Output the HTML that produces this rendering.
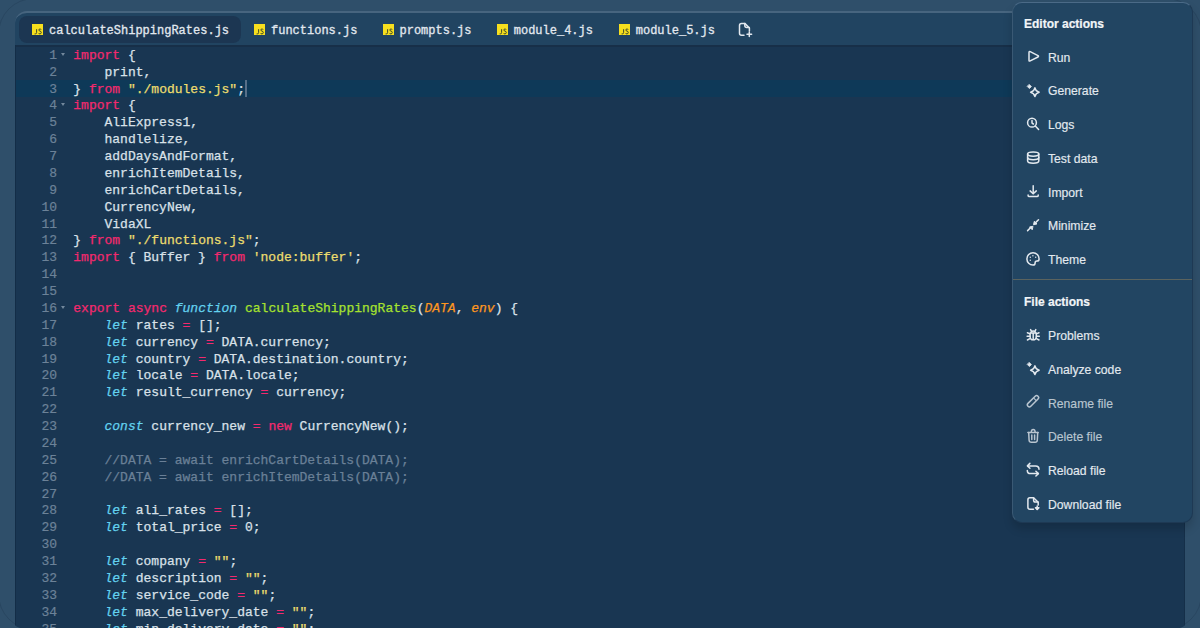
<!DOCTYPE html>
<html><head><meta charset="utf-8">
<style>
*{margin:0;padding:0;box-sizing:border-box}
html,body{width:1200px;height:628px;overflow:hidden}
body{background:#2f4f6a;position:relative;font-family:"Liberation Sans",sans-serif}
#panel{position:absolute;left:15px;top:11px;width:1170px;height:617.5px;border-radius:12px 12px 14px 14px / 12px 12px 5px 5px;background:#214461;border-top:2px solid #47657f;overflow:hidden}
#tabs{position:absolute;left:0;top:-1px;width:100%;height:34px;font-family:"Liberation Mono",monospace;font-size:12px;color:#e2e8ef}
.tab{position:absolute;top:4px;height:26.5px;line-height:26px;white-space:nowrap}
.tab.active{background:#1c3652;border-radius:8px}
.js{position:absolute}
.tt{position:absolute;top:1.6px;line-height:26px;-webkit-text-stroke:0.3px currentColor}
#code{position:absolute;left:0;top:32px;width:100%;height:620px;background:#193652;border-top:2px solid #172f48}
#hl{position:absolute;left:0;top:33px;width:100%;height:16.9px;background:#0e3958}
.ln{position:absolute;left:0;width:42px;text-align:right;font-family:"Liberation Mono",monospace;font-size:13px;color:#7b90a5}
#gut,#src{position:absolute;top:0.8px;font-family:"Liberation Mono",monospace;font-size:13px;line-height:16.88px;white-space:pre}
#gut{left:0;width:42px;text-align:right;color:#6c8298;-webkit-text-stroke:0.2px currentColor}
#src{left:58.3px;color:#d9e1e9;-webkit-text-stroke:0.25px currentColor}
.k{color:#f4296e}.s{color:#ecdd6e}.i{color:#63d2ef;font-style:italic}.f{color:#a6e22e}.p{color:#fd971f;font-style:italic}.c{color:#6a8097}
.fold{position:absolute;left:45.5px;width:0;height:0;border-left:2.7px solid transparent;border-right:2.7px solid transparent;border-top:3px solid #73889c}
#cursor{position:absolute;left:230px;top:33px;width:1.6px;height:16.5px;background:#566f88}
#menu{position:absolute;left:1012px;top:1.5px;width:181px;height:521px;border-radius:10px;background:#224562;border:1px solid;border-color:#4b6a87 #1e3954 #1e3954 #3a5974;box-shadow:0 6px 10px rgba(0,0,0,0.16)}
.mh{position:absolute;left:11px;font-weight:bold;font-size:12px;line-height:16px;-webkit-text-stroke:0.2px currentColor;color:#f2f5f8}
.mi{position:absolute;left:35px;font-size:12.2px;line-height:16px;-webkit-text-stroke:0.15px currentColor;color:#e3e9ef;white-space:nowrap}
.mi.dim{color:#b9c5d0}
.ic{position:absolute;left:14px;width:14px;height:14px;overflow:visible}
#sep{position:absolute;left:0px;top:276.5px;width:179px;height:1px;background:#5b635e}
</style></head><body>
<div style="position:absolute;left:-2px;top:-2px;width:1204px;height:632px;border-radius:36px;border:1px solid rgba(22,44,66,0.25)"></div>
<div id="panel">
 <div id="tabs">
  <div class="tab active" style="left:4px;width:222px"><svg class="js" style="left:13px;top:7.5px" width="11" height="11.5" viewBox="0 0 11 11.5"><rect width="11" height="11.5" fill="#f7df1e"/><path d="M4.6 5.2V8.6Q4.6 9.9 3.3 9.9H2.6M9.2 5.6Q8.9 5 8 5Q6.8 5 6.8 6Q6.8 6.8 8 7.1Q9.3 7.4 9.3 8.4Q9.3 9.9 7.9 9.9Q6.8 9.9 6.5 9.1" fill="none" stroke="#3d4a2a" stroke-width="1"/></svg><span class="tt" style="left:30px">calculateShippingRates.js</span></div>
  <div class="tab" style="left:226px;width:128px"><svg class="js" style="left:13px;top:7.5px" width="11" height="11.5" viewBox="0 0 11 11.5"><rect width="11" height="11.5" fill="#f7df1e"/><path d="M4.6 5.2V8.6Q4.6 9.9 3.3 9.9H2.6M9.2 5.6Q8.9 5 8 5Q6.8 5 6.8 6Q6.8 6.8 8 7.1Q9.3 7.4 9.3 8.4Q9.3 9.9 7.9 9.9Q6.8 9.9 6.5 9.1" fill="none" stroke="#3d4a2a" stroke-width="1"/></svg><span class="tt" style="left:30px">functions.js</span></div>
  <div class="tab" style="left:354.5px;width:114px"><svg class="js" style="left:13px;top:7.5px" width="11" height="11.5" viewBox="0 0 11 11.5"><rect width="11" height="11.5" fill="#f7df1e"/><path d="M4.6 5.2V8.6Q4.6 9.9 3.3 9.9H2.6M9.2 5.6Q8.9 5 8 5Q6.8 5 6.8 6Q6.8 6.8 8 7.1Q9.3 7.4 9.3 8.4Q9.3 9.9 7.9 9.9Q6.8 9.9 6.5 9.1" fill="none" stroke="#3d4a2a" stroke-width="1"/></svg><span class="tt" style="left:30px">prompts.js</span></div>
  <div class="tab" style="left:468.75px;width:122px"><svg class="js" style="left:13px;top:7.5px" width="11" height="11.5" viewBox="0 0 11 11.5"><rect width="11" height="11.5" fill="#f7df1e"/><path d="M4.6 5.2V8.6Q4.6 9.9 3.3 9.9H2.6M9.2 5.6Q8.9 5 8 5Q6.8 5 6.8 6Q6.8 6.8 8 7.1Q9.3 7.4 9.3 8.4Q9.3 9.9 7.9 9.9Q6.8 9.9 6.5 9.1" fill="none" stroke="#3d4a2a" stroke-width="1"/></svg><span class="tt" style="left:30px">module_4.js</span></div>
  <div class="tab" style="left:590.75px;width:122px"><svg class="js" style="left:13px;top:7.5px" width="11" height="11.5" viewBox="0 0 11 11.5"><rect width="11" height="11.5" fill="#f7df1e"/><path d="M4.6 5.2V8.6Q4.6 9.9 3.3 9.9H2.6M9.2 5.6Q8.9 5 8 5Q6.8 5 6.8 6Q6.8 6.8 8 7.1Q9.3 7.4 9.3 8.4Q9.3 9.9 7.9 9.9Q6.8 9.9 6.5 9.1" fill="none" stroke="#3d4a2a" stroke-width="1"/></svg><span class="tt" style="left:30px">module_5.js</span></div>
 </div>
 <div id="code">
  <div id="hl"></div><div style="position:absolute;left:0;top:-2px;width:1px;height:640px;background:#132d47"></div><div style="position:absolute;right:0;top:-2px;width:1px;height:640px;background:#152f49"></div><div class="fold" style="top:5.5px"></div><div class="fold" style="top:56.2px"></div><div class="fold" style="top:259px"></div><div id="cursor"></div>
  <div id="gut">1
2
3
4
5
6
7
8
9
10
11
12
13
14
15
16
17
18
19
20
21
22
23
24
25
26
27
28
29
30
31
32
33
34
35</div>
<div id="src"><span class="k">import</span> {
    print,
} <span class="k">from</span> <span class="s">"./modules.js"</span>;
<span class="k">import</span> {
    AliExpress1,
    handlelize,
    addDaysAndFormat,
    enrichItemDetails,
    enrichCartDetails,
    CurrencyNew,
    VidaXL
} <span class="k">from</span> <span class="s">"./functions.js"</span>;
<span class="k">import</span> { Buffer } <span class="k">from</span> <span class="s">'node:buffer'</span>;


<span class="k">export</span> <span class="k">async</span> <span class="i">function</span> <span class="f">calculateShippingRates</span>(<span class="p">DATA</span>, <span class="p">env</span>) {
    <span class="i">let</span> rates <span class="k">=</span> [];
    <span class="i">let</span> currency <span class="k">=</span> DATA.currency;
    <span class="i">let</span> country <span class="k">=</span> DATA.destination.country;
    <span class="i">let</span> locale <span class="k">=</span> DATA.locale;
    <span class="i">let</span> result_currency <span class="k">=</span> currency;

    <span class="i">const</span> currency_new <span class="k">=</span> <span class="k">new</span> CurrencyNew();

    <span class="c">//DATA = await enrichCartDetails(DATA);</span>
    <span class="c">//DATA = await enrichItemDetails(DATA);</span>

    <span class="i">let</span> ali_rates <span class="k">=</span> [];
    <span class="i">let</span> total_price <span class="k">=</span> 0;

    <span class="i">let</span> company <span class="k">=</span> <span class="s">""</span>;
    <span class="i">let</span> description <span class="k">=</span> <span class="s">""</span>;
    <span class="i">let</span> service_code <span class="k">=</span> <span class="s">""</span>;
    <span class="i">let</span> max_delivery_date <span class="k">=</span> <span class="s">""</span>;
    <span class="i">let</span> min_delivery_date <span class="k">=</span> <span class="s">""</span>;</div>
 </div>
</div>
<div id="menu"><div class="mh" style="top:13.3px">Editor actions</div><div class="mh" style="top:291.6px">File actions</div><div id="sep"></div><div class="mi" style="top:47.1px">Run</div><div class="mi" style="top:80.7px">Generate</div><div class="mi" style="top:114.6px">Logs</div><div class="mi" style="top:148.4px">Test data</div><div class="mi" style="top:182.1px">Import</div><div class="mi" style="top:215.9px">Minimize</div><div class="mi" style="top:249.8px">Theme</div><div class="mi" style="top:325.4px">Problems</div><div class="mi" style="top:359.2px">Analyze code</div><div class="mi dim" style="top:393.0px">Rename file</div><div class="mi dim" style="top:426.8px">Delete file</div><div class="mi" style="top:460.6px">Reload file</div><div class="mi" style="top:494.4px">Download file</div></div>
<svg style="position:absolute;left:1024px;top:48px" width="20" height="18" viewBox="0 0 20 18" fill="none" stroke="#e3e9ef" stroke-width="1.5" stroke-linecap="round" stroke-linejoin="round"><path d="M5 4.4Q5 3.1 6.2 3.7L14 7.6Q15 8.3 14 9L6.2 12.9Q5 13.5 5 12.2Z"/></svg><svg style="position:absolute;left:1024px;top:82px" width="20" height="18" viewBox="0 0 20 18" fill="none" stroke="#e3e9ef" stroke-width="1.5" stroke-linecap="round" stroke-linejoin="round"><path d="M5.4 2.6L7.4 4.6L5.4 6.6L3.4 4.6Z" fill="#e3e9ef" stroke-width="0.8"/><path d="M10.9 5.8Q11.7 9.4 15.2 10.2Q11.7 11 10.9 14.5Q10.1 11 6.6 10.2Q10.1 9.4 10.9 5.8Z"/></svg><svg style="position:absolute;left:1024px;top:116px" width="20" height="18" viewBox="0 0 20 18" fill="none" stroke="#e3e9ef" stroke-width="1.5" stroke-linecap="round" stroke-linejoin="round"><circle cx="8" cy="6.7" r="4.4"/><path d="M11.3 10L14.6 13.4"/><path d="M8 4.6V7.1L9.4 8"/></svg><svg style="position:absolute;left:1024px;top:148px" width="20" height="18" viewBox="0 0 20 18" fill="none" stroke="#e3e9ef" stroke-width="1.5" stroke-linecap="round" stroke-linejoin="round"><ellipse cx="9.2" cy="6.1" rx="5.6" ry="2.1"/><path d="M3.6 6.1V9.6A5.6 2.1 0 0 0 14.8 9.6V6.1"/><path d="M3.6 9.6V13.1A5.6 2.1 0 0 0 14.8 13.1V9.6"/></svg><svg style="position:absolute;left:1024px;top:182px" width="20" height="18" viewBox="0 0 20 18" fill="none" stroke="#e3e9ef" stroke-width="1.5" stroke-linecap="round" stroke-linejoin="round"><path d="M9.2 3.8V11.4"/><path d="M6.1 8.9L9.2 11.8L12.3 8.9"/><path d="M4.1 12.9V13.4Q4.1 14.5 5.3 14.5H13Q14.2 14.5 14.2 13.4V12.9"/></svg><svg style="position:absolute;left:1024px;top:216px" width="20" height="18" viewBox="0 0 20 18" fill="none" stroke="#e3e9ef" stroke-width="1.5" stroke-linecap="round" stroke-linejoin="round"><path d="M3.6 14.6L7 11.2"/><path d="M8.6 10.4L5.5 11L8 13.5Z" fill="#e3e9ef" stroke-width="1"/><path d="M14.5 3.7L11.3 6.9"/><path d="M9.6 8.4L10.3 5.3L12.7 7.7Z" fill="#e3e9ef" stroke-width="1"/></svg><svg style="position:absolute;left:1024px;top:250px" width="20" height="18" viewBox="0 0 20 18" fill="none" stroke="#e3e9ef" stroke-width="1.5" stroke-linecap="round" stroke-linejoin="round"><path d="M9 15A6.1 6.1 0 1 1 15.1 8.9Q15.1 11.1 12.9 11.1Q11.1 11.1 11.1 12.9Q11.1 15 9 15Z"/><circle cx="6.3" cy="7.3" r="0.7" fill="#e3e9ef" stroke="none"/><circle cx="8.9" cy="5.8" r="0.7" fill="#e3e9ef" stroke="none"/><circle cx="11.7" cy="7.2" r="0.7" fill="#e3e9ef" stroke="none"/><circle cx="6.3" cy="10.3" r="0.7" fill="#e3e9ef" stroke="none"/></svg><svg style="position:absolute;left:1024px;top:326px" width="20" height="18" viewBox="0 0 20 18" fill="none" stroke="#e3e9ef" stroke-width="1.5" stroke-linecap="round" stroke-linejoin="round"><path d="M6.6 3.6L7.4 5.1M11.8 3.6L11 5.1"/><path d="M7 6.3Q9.2 3.9 11.4 6.3"/><path d="M6.1 7H12.3V10.4A3.1 3.4 0 0 1 6.1 10.4Z"/><path d="M9.2 7.3V13.4"/><path d="M3.4 6.8L6 7.9M15 6.8L12.4 7.9M3.1 10.2H6M15.3 10.2H12.4M3.4 14L6.3 12.4M15 14L12.1 12.4"/></svg><svg style="position:absolute;left:1024px;top:360px" width="20" height="18" viewBox="0 0 20 18" fill="none" stroke="#e3e9ef" stroke-width="1.5" stroke-linecap="round" stroke-linejoin="round"><path d="M5.4 2.6L7.4 4.6L5.4 6.6L3.4 4.6Z" fill="#e3e9ef" stroke-width="0.8"/><path d="M10.9 5.8Q11.7 9.4 15.2 10.2Q11.7 11 10.9 14.5Q10.1 11 6.6 10.2Q10.1 9.4 10.9 5.8Z"/></svg><svg style="position:absolute;left:1024px;top:394px" width="20" height="18" viewBox="0 0 20 18" fill="none" stroke="#b9c5d0" stroke-width="1.5" stroke-linecap="round" stroke-linejoin="round"><rect x="-7.1" y="-2" width="14.2" height="4" rx="2" transform="translate(9 7.2) rotate(-45)"/><path d="M12 6.3L10 4.3" stroke-width="1.1"/></svg><svg style="position:absolute;left:1024px;top:428px" width="20" height="18" viewBox="0 0 20 18" fill="none" stroke="#b9c5d0" stroke-width="1.5" stroke-linecap="round" stroke-linejoin="round"><path d="M3.9 4.4H14.2"/><path d="M7.2 4.3Q7.4 1.6 9.2 1.6Q11 1.6 11.2 4.3"/><path d="M4.7 4.6L5.1 12.2Q5.3 14.2 7.2 14.2H11.2Q13.1 14.2 13.3 12.2L13.7 4.6"/><path d="M7.8 7V11.4M10.6 7V11.4"/></svg><svg style="position:absolute;left:1024px;top:461px" width="20" height="18" viewBox="0 0 20 18" fill="none" stroke="#e3e9ef" stroke-width="1.5" stroke-linecap="round" stroke-linejoin="round"><path d="M3.8 4.9H11.6Q15 4.9 15 8.3"/><path d="M5.9 2.4L3.4 4.9L5.9 7.3"/><path d="M3.3 9.4Q3.3 12.6 6.6 12.6H14.2"/><path d="M11.9 10.2L14.4 12.6L11.9 15"/></svg><svg style="position:absolute;left:1024px;top:495px" width="20" height="18" viewBox="0 0 20 18" fill="none" stroke="#e3e9ef" stroke-width="1.5" stroke-linecap="round" stroke-linejoin="round"><path d="M9.5 14.2H5.9Q3.9 14.2 3.9 12.2V4.7Q3.9 2.7 5.9 2.7H9.6L14.2 7.3V10"/><path d="M9.6 2.9V5.2Q9.6 7 11.4 7H14"/><path d="M13.2 10.9V14.3"/><path d="M11.5 12.7L13.2 14.5L14.9 12.7Z" fill="#e3e9ef"/></svg><svg style="position:absolute;left:734px;top:20px" width="22" height="20" viewBox="0 0 22 20" fill="none" stroke="#e2e8ef" stroke-width="1.5" stroke-linecap="round" stroke-linejoin="round"><path d="M10 15.2H7.5Q5.5 15.2 5.5 13.2V5.4Q5.5 3.4 7.5 3.4H10.8L15.4 8V11"/><path d="M10.8 3.6V5.6Q10.8 7.6 12.8 7.6H15.2"/><path d="M15.3 12V16.6M13 14.3H17.6"/></svg>
</body></html>
